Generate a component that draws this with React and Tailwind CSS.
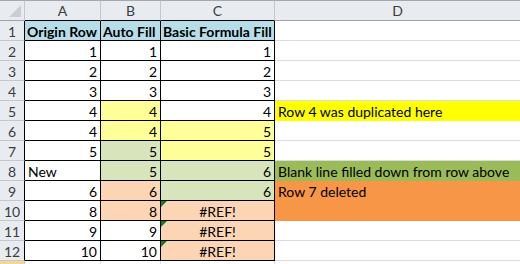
import React from "react";

const COLS = ["A", "B", "C", "D"];

const ROWS = [
  { a: "Origin Row", b: "Auto Fill", c: "Basic Formula Fill", head: true },
  { a: "1", b: "1", c: "1" },
  { a: "2", b: "2", c: "2" },
  { a: "3", b: "3", c: "3" },
  { a: "4", b: "4", c: "4", bFill: "bg-[#ffff99]", d: "Row 4 was duplicated here", dFill: "bg-[#ffff00]" },
  { a: "4", b: "4", c: "5", bFill: "bg-[#ffff99]", cFill: "bg-[#ffff99]" },
  { a: "5", b: "5", c: "5", bFill: "bg-[#d8e4bc]", cFill: "bg-[#ffff99]" },
  { a: "New", b: "5", c: "6", aLeft: true, bFill: "bg-[#d8e4bc]", cFill: "bg-[#d8e4bc]", d: "Blank line filled down from row above", dFill: "bg-[#9bbb59]" },
  { a: "6", b: "6", c: "6", bFill: "bg-[#fcd5b4]", cFill: "bg-[#d8e4bc]", d: "Row 7 deleted", dFill: "bg-[#f79646]" },
  { a: "8", b: "8", c: "#REF!", bFill: "bg-[#fcd5b4]", cFill: "bg-[#fcd5b4]", err: true, dFill: "bg-[#f79646]" },
  { a: "9", b: "9", c: "#REF!", cFill: "bg-[#fcd5b4]", err: true },
  { a: "10", b: "10", c: "#REF!", cFill: "bg-[#fcd5b4]", err: true },
];

const ErrorMark = () => (
  <span className="absolute left-0 top-0 w-0 h-0 border-t-[6px] border-r-[6px] border-t-[#1b7a1b] border-r-transparent" />
);

export default function App() {
  return (
    <div className="w-[520px] h-[264px] overflow-hidden bg-white text-black font-['Lato',sans-serif] text-[14px] leading-none whitespace-nowrap">
      <div className="grid grid-cols-[25px_76px_60px_114px_245px] grid-rows-[21px_repeat(13,20px)]">
        {/* column headers */}
        <div className="relative bg-[#e8ebef] border-t border-t-[#a3a8ae] border-r border-r-[#c4c8cd] border-b border-b-[#9ea3a9]">
          <svg className="absolute right-[3px] bottom-[3px]" width="12" height="12" viewBox="0 0 12 12">
            <polygon points="12,0 12,12 0,12" fill="#c9ced5" />
          </svg>
        </div>
        {COLS.map((c, i) => (
          <div
            key={c}
            className={`flex items-center justify-center pt-[1px] bg-[#e8ebef] text-[#3d3d3d] border-t border-t-[#a3a8ae] border-b ${
              i < 3 ? "border-b-black border-r border-r-[#c4c8cd]" : "border-b-[#9ea3a9]"
            }`}
          >
            {c}
          </div>
        ))}

        {ROWS.map((r, i) => (
          <React.Fragment key={i}>
            <div className="flex items-center justify-center pt-[2px] bg-[#e8ebef] text-[#3d3d3d] border-r border-r-black border-b border-b-[#c4c8cd]">
              {i + 1}
            </div>
            <div
              className={`flex items-center pt-[2px] px-[3px] border-r border-b border-black ${
                r.head ? "bg-[#b7dee8] font-bold justify-start pl-[2px]" : r.aLeft ? "justify-start" : "justify-end"
              }`}
            >
              {r.a}
            </div>
            <div
              className={`flex items-center pt-[2px] px-[3px] border-r border-b border-black ${
                r.head ? "bg-[#b7dee8] font-bold justify-start pl-[2px]" : "justify-end"
              } ${r.bFill || ""}`}
            >
              {r.b}
            </div>
            <div
              className={`relative flex items-center pt-[2px] px-[3px] border-r border-b border-black ${
                r.head ? "bg-[#b7dee8] font-bold justify-start pl-[2px]" : r.err ? "justify-center" : "justify-end"
              } ${r.cFill || ""}`}
            >
              {r.err && <ErrorMark />}
              {r.c}
            </div>
            <div
              className={`flex items-center pt-[2px] pl-[3px] ${
                r.dFill ? r.dFill : "border-b border-b-[#dadcdd]"
              }`}
            >
              {r.d}
            </div>
          </React.Fragment>
        ))}

        {/* row 13, partly visible */}
        <div className="bg-[#f7d68e] border-r border-r-[#c4c8cd]" />
        <div className="border-r border-r-[#dadcdd]" />
        <div className="border-r border-r-[#dadcdd]" />
        <div className="border-r border-r-[#dadcdd]" />
        <div />
      </div>
    </div>
  );
}
